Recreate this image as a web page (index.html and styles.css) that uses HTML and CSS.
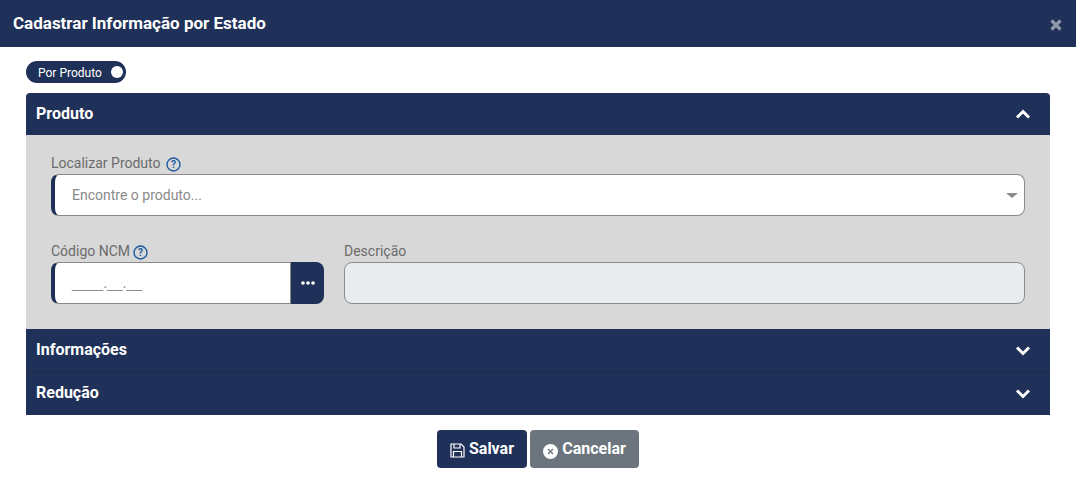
FILE: index.html
```html
<!DOCTYPE html>
<html lang="en">
<head>
    <meta charset="UTF-8">
    <meta name="viewport" content="width=device-width, initial-scale=1.0">
    <title>Cadastrar Informação por Estado</title>
    <link rel="stylesheet" href="styles.css">
</head>
<body>
    <div class="modal-header">
        <h2>Cadastrar Informação por Estado</h2>
        <button type="button" class="close-button">
            <svg width="12" height="12" viewBox="0 0 12 12"><path d="M1.500 1.500l9 9M10.500 1.500l-9 9" stroke="currentColor" stroke-width="3.200" fill="none"/></svg>
        </button>
    </div>

    <div class="modal-body">
        <div class="toggle">
            <span>Por Produto</span>
            <span class="toggle-knob"></span>
        </div>

        <div class="accordion">
            <div class="accordion-header first">
                <span>Produto</span>
                <svg class="chevron" width="16" height="11" viewBox="0 0 16 11"><path d="M2 8.500l6-6 6 6" stroke="currentColor" stroke-width="3" fill="none"/></svg>
            </div>
            <div class="accordion-body">
                <div class="field">
                    <label class="wide-label">Localizar Produto
                        <svg class="help" width="15" height="15" viewBox="0 0 15 15"><circle cx="7.500" cy="7.500" r="6.500" fill="none" stroke="currentColor" stroke-width="1.400"/><text x="7.500" y="11" text-anchor="middle">?</text></svg>
                    </label>
                    <div class="select-box">
                        <span>Encontre o produto...</span>
                        <span class="caret"></span>
                    </div>
                </div>
                <div class="field-row">
                    <div class="field ncm">
                        <label>Código NCM
                            <svg class="help" width="15" height="15" viewBox="0 0 15 15"><circle cx="7.500" cy="7.500" r="6.500" fill="none" stroke="currentColor" stroke-width="1.400"/><text x="7.500" y="11" text-anchor="middle">?</text></svg>
                        </label>
                        <div class="input-group">
                            <div class="mask-input">____.__.__</div>
                            <button type="button" class="dots-button">
                                <svg width="14" height="4" viewBox="0 0 14 4"><circle cx="2" cy="2" r="1.800" fill="currentColor"/><circle cx="7" cy="2" r="1.800" fill="currentColor"/><circle cx="12" cy="2" r="1.800" fill="currentColor"/></svg>
                            </button>
                        </div>
                    </div>
                    <div class="field descricao">
                        <label>Descrição</label>
                        <div class="disabled-input"></div>
                    </div>
                </div>
            </div>
            <div class="accordion-header">
                <span>Informações</span>
                <svg class="chevron" width="16" height="11" viewBox="0 0 16 11"><path d="M2 2.500l6 6 6-6" stroke="currentColor" stroke-width="3" fill="none"/></svg>
            </div>
            <div class="accordion-header last">
                <span>Redução</span>
                <svg class="chevron" width="16" height="11" viewBox="0 0 16 11"><path d="M2 2.500l6 6 6-6" stroke="currentColor" stroke-width="3" fill="none"/></svg>
            </div>
        </div>

        <div class="actions">
            <button type="button" class="btn btn-save">
                <svg width="15" height="15" viewBox="0 0 15 15" fill="none" stroke="currentColor" stroke-width="1.200"><path d="M1 1h10l3 3v10H1z"/><path d="M4 1v4h6V1M3.500 14V8.500h8V14"/></svg>
                Salvar
            </button>
            <button type="button" class="btn btn-cancel">
                <svg width="15" height="15" viewBox="0 0 15 15"><circle cx="7.500" cy="7.500" r="7.500" fill="currentColor"/><path d="M5 5l5 5M10 5l-5 5" stroke="#6c757d" stroke-width="1.300" fill="none"/></svg>
                Cancelar
            </button>
        </div>
    </div>
</body>
</html>
```

FILE: styles.css
```css
* {
    box-sizing: border-box;
}
body {
    margin: 0;
    font-family: Roboto, Arial, sans-serif;
    background-color: #fff;
}
.modal-header {
    height: 47px;
    background-color: #1f3158;
    color: #fff;
    display: flex;
    justify-content: space-between;
    align-items: center;
    padding: 0 14px 0 13px;
}
.modal-header h2 {
    margin: 0 0 1px;
    font-size: 17px;
    font-weight: 700;
}
.close-button {
    background: none;
    border: none;
    padding: 0;
    margin-top: 3px;
    color: #8f98aa;
    display: flex;
}
.modal-body {
    padding: 14px 26px 0;
}
.toggle {
    width: 100px;
    height: 22px;
    border-radius: 11px;
    background-color: #1f3158;
    color: #fff;
    font-size: 12px;
    display: flex;
    justify-content: space-between;
    align-items: center;
    padding: 1px 1px 0 12px;
    margin-bottom: 10px;
}
.toggle-knob {
    width: 12px;
    height: 12px;
    border-radius: 50%;
    background-color: #fff;
    margin: -2px 2px 0 0;
}
.accordion-header {
    height: 43px;
    background-color: #1f3158;
    color: #fff;
    font-size: 16px;
    font-weight: 700;
    display: flex;
    justify-content: space-between;
    align-items: center;
    padding: 0 19px 2px 10px;
    border-bottom: 1px solid #1b2b4d;
}
.accordion-header.first {
    height: 42px;
    border-bottom: none;
    border-radius: 4px 4px 0 0;
}
.accordion-header.last {
    border-bottom: none;
}
.chevron {
    margin-top: 2px;
}
.accordion-body {
    height: 194px;
    background-color: #d8d8d8;
    padding: 20px 25px 0;
}
.field label {
    display: flex;
    align-items: center;
    height: 18px;
    padding-bottom: 2px;
    font-size: 14px;
    color: #6b6b6b;
    margin-bottom: 1px;
    gap: 3px;
}
.field label.wide-label {
    gap: 5px;
}
.help {
    color: #1d5aa0;
    margin-top: 2px;
}
.help text {
    font-family: Roboto, Arial, sans-serif;
    font-size: 10px;
    font-weight: 700;
    fill: currentColor;
}
.select-box {
    height: 42px;
    background-color: #fff;
    border: 1px solid #8a8a8a;
    border-left: 4px solid #1f3158;
    border-radius: 8px;
    display: flex;
    justify-content: space-between;
    align-items: center;
    padding: 0 6px 0 17px;
    font-size: 14px;
    color: #8a8a8a;
}
.caret {
    width: 0;
    height: 0;
    border-left: 6px solid transparent;
    border-right: 6px solid transparent;
    border-top: 5px solid #8a8a8a;
}
.field-row {
    display: flex;
    gap: 20px;
    margin-top: 27px;
}
.ncm {
    width: 273px;
}
.descricao {
    flex: 1;
}
.input-group {
    display: flex;
    height: 42px;
}
.mask-input {
    flex: 1;
    background-color: #fff;
    border: 1px solid #8a8a8a;
    border-left: 4px solid #1f3158;
    border-right: none;
    border-radius: 8px 0 0 8px;
    padding: 12px 0 0 17px;
    font-family: "Liberation Sans", Arial, sans-serif;
    font-size: 14px;
    color: #8a8a8a;
}
.dots-button {
    width: 34px;
    background-color: #1f3158;
    border: none;
    border-left: 1px solid #8a8a8a;
    border-radius: 0 8px 8px 0;
    color: #fff;
    padding: 0;
    display: flex;
    justify-content: center;
    align-items: center;
}
.disabled-input {
    height: 42px;
    background-color: #e9ecef;
    border: 1px solid #8a8a8a;
    border-radius: 8px;
}
.actions {
    display: flex;
    justify-content: center;
    gap: 3px;
    margin-top: 15px;
}
.btn {
    height: 38px;
    border: none;
    border-radius: 4px;
    color: #fff;
    font-family: Roboto, Arial, sans-serif;
    font-size: 16px;
    font-weight: 700;
    display: flex;
    justify-content: center;
    align-items: center;
    gap: 4px;
    padding: 0 0 2px;
}
.btn-save {
    width: 90px;
    background-color: #1f3158;
}
.btn-cancel {
    width: 109px;
    background-color: #6c757d;
}
.btn-save svg {
    margin-top: 5px;
}
.btn-cancel svg {
    margin-top: 6px;
}
```
